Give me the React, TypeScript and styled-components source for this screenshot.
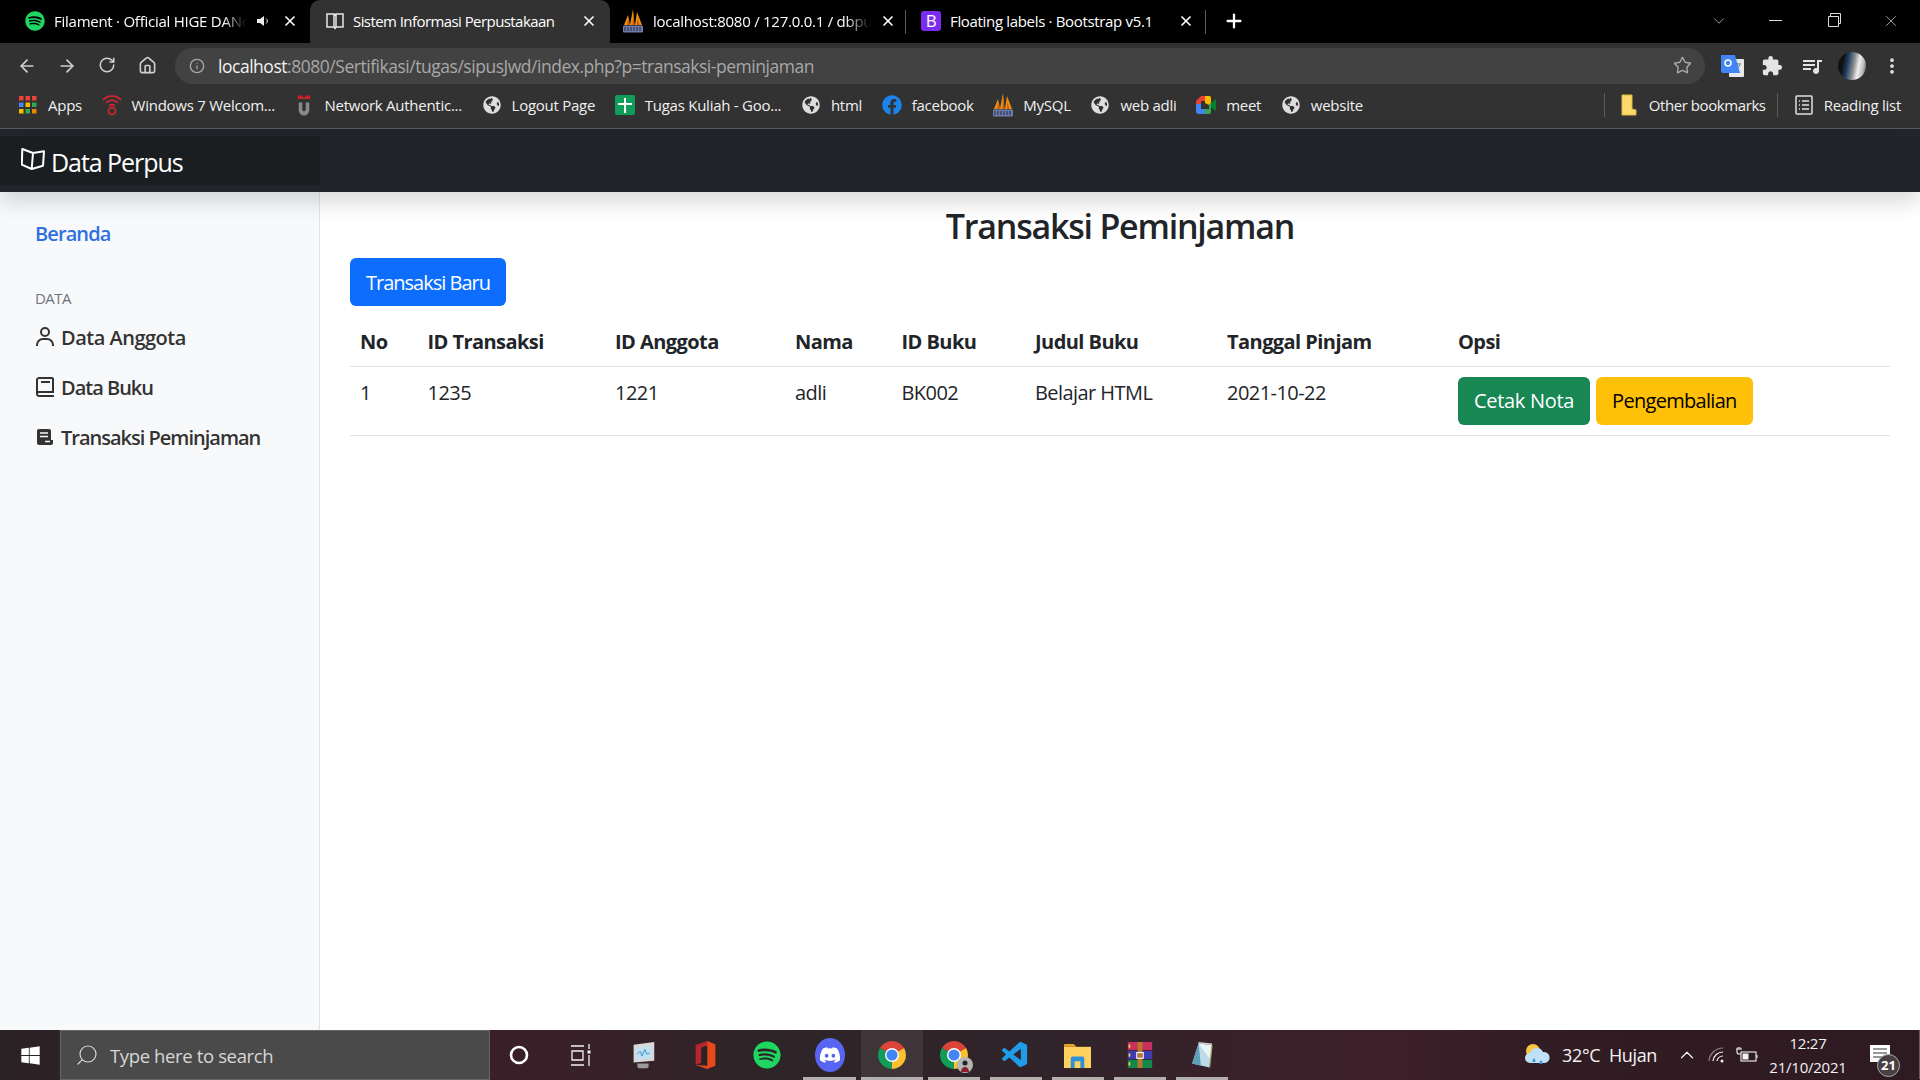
import React from "react";
import styled, { createGlobalStyle } from "styled-components";
import { BiBook, BiUser } from "react-icons/bi";
import { FaDiscord, FaFacebook, FaGlobeAmericas, FaSpotify, FaWindows } from "react-icons/fa";
import { MdExtension, MdQueueMusic } from "react-icons/md";
import { VscVscode } from "react-icons/vsc";
import { ArrowLeft, ArrowRight, ChevronDown, ChevronUp, Home, Info, MoreVertical, Plus, RotateCw, Search, Star, X } from "lucide-react";

const GlobalStyle = createGlobalStyle`
  html, body { margin: 0; padding: 0; background: #fff; }
  body { font-family: "Open Sans", "Noto Sans", sans-serif; letter-spacing: -0.035em; }
  * { box-sizing: border-box; }
`;

const Screen = styled.div`
  width: 1920px;
  height: 1080px;
  display: flex;
  flex-direction: column;
  overflow: hidden;
`;

/* tab strip */
const TabStrip = styled.div`
  height: 43px;
  background: #000;
  display: flex;
  align-items: stretch;
  flex-shrink: 0;
`;

const Tab = styled.div<{ $active?: boolean; $w: number; $pad: number; $divider?: boolean }>`
  position: relative;
  width: ${p => p.$w}px;
  padding: 0 0 2px ${p => p.$pad}px;
  display: flex;
  align-items: center;
  gap: 9px;
  color: #fff;
  font-size: 15px;
  letter-spacing: -0.017em;
  background: ${p => (p.$active ? "#323232" : "transparent")};
  border-radius: ${p => (p.$active ? "10px 10px 0 0" : "0")};
  &::after {
    content: "";
    position: absolute;
    right: 0;
    top: 10px;
    bottom: 9px;
    width: 1px;
    background: #5a5a5a;
    display: ${p => (p.$divider ? "block" : "none")};
  }
`;

const TabTitle = styled.span<{ $w: number; $fade?: boolean; $track?: string }>`
  width: ${p => p.$w}px;
  white-space: nowrap;
  overflow: hidden;
  flex-shrink: 0;
  letter-spacing: ${p => p.$track || "inherit"};
  ${p => p.$fade && "-webkit-mask-image: linear-gradient(90deg, #000 88%, transparent);"}
`;

const TabClose = styled(X)<{ $x: number }>`
  position: absolute;
  top: 13px;
  left: ${p => p.$x}px;
  color: #fff;
`;

const Speaker = styled.svg`
  position: absolute;
  left: 256px;
  top: 14px;
`;

const NewTab = styled(Plus)`
  margin: 10px 0 0 17px;
  color: #fff;
`;

const WindowControls = styled.div`
  margin-left: auto;
  display: flex;
  align-items: flex-start;
  color: #ccc;
`;

const WindowButton = styled.div`
  width: 57.5px;
  height: 43px;
  display: flex;
  justify-content: center;
  padding-top: 12px;
`;

/* address bar row */
const Toolbar = styled.div`
  height: 45px;
  background: #323232;
  display: flex;
  align-items: center;
  color: #d0d0d0;
  flex-shrink: 0;
`;

const NavButton = styled.div`
  width: 40px;
  display: flex;
  justify-content: center;
`;

const NavGroup = styled.div`
  width: 175px;
  display: flex;
  padding-left: 7px;
`;

const AddressBar = styled.div`
  width: 1530px;
  height: 36px;
  border-radius: 18px;
  background: #424242;
  display: flex;
  align-items: center;
  padding: 0 14px 0 14px;
  font-size: 17.5px;
  letter-spacing: -0.027em;
  color: #a8a8a8;
`;

const Host = styled.span`
  color: #f2f2f2;
  margin-left: 13px;
`;

const UrlEnd = styled.div`
  margin-left: auto;
  margin-right: -1px;
  display: flex;
`;

const ExtensionRow = styled.div`
  flex: 1;
  display: flex;
  align-items: center;
  padding-left: 7px;
`;

const ExtensionSlot = styled.div`
  width: 40px;
  display: flex;
  justify-content: center;
`;

const Avatar = styled.div`
  width: 28px;
  height: 28px;
  border-radius: 50%;
  background: linear-gradient(100deg, #111 0 20%, #1d3f63 35%, #8d8d8d 55%, #eee 70%, #bbb 85%, #333);
`;

/* bookmarks */
const BookmarksBar = styled.div`
  height: 41px;
  background: #323232;
  border-bottom: 1px solid #5c5c5c;
  display: flex;
  align-items: center;
  padding: 0 19px 6px 18px;
  color: #f0f0f0;
  font-size: 15px;
  letter-spacing: -0.017em;
  flex-shrink: 0;
  gap: 19.6px;
`;

const Bookmark = styled.div<{ $track?: string }>`
  display: flex;
  align-items: center;
  gap: 10px;
  white-space: nowrap;
  letter-spacing: ${p => p.$track || "inherit"};
`;

const BarDivider = styled.div<{ $first?: boolean }>`
  width: 1px;
  height: 24px;
  background: #5a5a5a;
  margin-left: ${p => (p.$first ? "auto" : "-8px")};
  margin-right: ${p => (p.$first ? "-6px" : "-4px")};
`;

const IconBox = styled.span`
  width: 20px;
  height: 20px;
  display: inline-flex;
  align-items: center;
  justify-content: center;
  flex-shrink: 0;
  svg {
    flex-shrink: 0;
  }
`;

/* page navbar */
const Navbar = styled.header`
  height: 63px;
  background: #212529;
  position: relative;
  z-index: 2;
  box-shadow: 0 10px 20px rgba(0, 0, 0, 0.15);
  display: flex;
  align-items: center;
  flex-shrink: 0;
`;

const Brand = styled.div`
  width: 320px;
  height: 49px;
  background: #1b1e21;
  color: #fff;
  font-size: 25px;
  letter-spacing: -0.042em;
  display: flex;
  align-items: center;
  gap: 6px;
  padding: 2px 0 0 21px;
  svg {
    margin-top: -4px;
  }
`;

/* page body */
const Body = styled.div`
  flex: 1;
  display: flex;
  min-height: 0;
`;

const Sidebar = styled.nav`
  width: 320px;
  flex-shrink: 0;
  background: #f8f9fa;
  border-right: 1px solid #e2e3e5;
  padding-top: 17px;
`;

const NavLink = styled.a<{ $current?: boolean; $track?: string }>`
  display: flex;
  align-items: center;
  gap: 4px;
  height: 50px;
  padding-left: 35px;
  font-size: 20px;
  line-height: 30px;
  font-weight: 600;
  letter-spacing: ${p => p.$track || "-0.05em"};
  color: ${p => (p.$current ? "#2f6fe0" : "#333")};
  svg {
    margin-left: -2px;
    margin-top: -2px;
  }
`;

const SideHeading = styled.h6`
  margin: 28px 0 3px;
  padding-left: 35px;
  font-size: 15px;
  line-height: 22.5px;
  font-weight: 500;
  text-transform: uppercase;
  color: #6c757d;
`;

const Main = styled.main`
  flex: 1;
  padding: 13px 30px 0;
  color: #212529;
`;

const Heading = styled.h3`
  margin: 0 0 11px;
  font-size: 34px;
  line-height: 42px;
  font-weight: 600;
  letter-spacing: -0.036em;
  text-align: center;
`;

const Button = styled.button<{ $bg: string; $fg: string; $track: string }>`
  height: 48px;
  padding: 0 16px;
  border: none;
  border-radius: 6px;
  background: ${p => p.$bg};
  color: ${p => p.$fg};
  font: inherit;
  font-size: 20px;
  letter-spacing: ${p => p.$track};
`;

const Table = styled.table`
  width: 100%;
  margin-top: 10px;
  border-collapse: collapse;
  table-layout: fixed;
  font-size: 20px;
  line-height: 30px;
`;

const HeadCell = styled.th`
  padding: 11px 10px 9px;
  text-align: left;
  font-weight: 700;
  border-bottom: 1px solid #dee2e6;
`;

const Cell = styled.td`
  padding: 11px 10px 9px;
  vertical-align: top;
  border-bottom: 1px solid #dee2e6;
`;

const Actions = styled.div`
  display: flex;
  gap: 6px;
  margin: -1px 0 1px;
`;

/* windows taskbar */
const Taskbar = styled.footer`
  height: 50px;
  display: flex;
  align-items: stretch;
  flex-shrink: 0;
  position: relative;
  color: #f2f2f2;
  background: linear-gradient(90deg, #2b2226 0%, #3a1f29 28%, #2e2528 40%, #31232a 55%, #3e2029 72%, #321c24 80%, #2e1a22 100%);
`;

const StartButton = styled.div`
  width: 60px;
  display: flex;
  align-items: center;
  justify-content: center;
  color: #fff;
`;

const SearchBox = styled.div`
  width: 430px;
  background: #4a4a4a;
  border: 1px solid #666;
  display: flex;
  align-items: center;
  gap: 11px;
  padding-left: 14px;
  font-size: 18.5px;
  letter-spacing: -0.02em;
  color: #d6d6d6;
`;

const TaskApps = styled.div`
  display: flex;
  margin-left: -2px;
`;

const TaskButton = styled.div<{ $active?: boolean; $open?: boolean }>`
  position: relative;
  width: 62.1px;
  display: flex;
  align-items: center;
  justify-content: center;
  background: ${p => (p.$active ? "rgba(255,255,255,0.08)" : "transparent")};
  &::after {
    content: "";
    display: ${p => (p.$open ? "block" : "none")};
    position: absolute;
    bottom: 0;
    left: ${p => (p.$active ? 0 : 5)}px;
    right: ${p => (p.$active ? 0 : 5)}px;
    height: 3px;
    background: #b3afad;
  }
`;

const DiscordBadge = styled.span`
  width: 30px;
  height: 34px;
  border-radius: 50%;
  background: #5865f2;
  color: #fff;
  display: flex;
  align-items: center;
  justify-content: center;
`;

const ProfileChrome = styled.span`
  position: relative;
  display: flex;
`;

const ProfileDot = styled.svg`
  position: absolute;
  right: -5px;
  bottom: -4px;
`;

const Tray = styled.div`
  margin-left: auto;
  display: flex;
  align-items: center;
  padding-bottom: 1px;
`;

const Weather = styled.div`
  display: flex;
  align-items: center;
  gap: 11px;
  font-size: 18px;
  letter-spacing: -0.02em;
  margin-right: 15px;
`;

const TrayIcon = styled.div`
  width: 30px;
  display: flex;
  justify-content: center;
`;

const Clock = styled.div`
  width: 92px;
  text-align: center;
  font-size: 15px;
  line-height: 24px;
  letter-spacing: -0.015em;
`;

const Notification = styled.div`
  width: 61px;
  position: relative;
  height: 100%;
  border-right: 1px solid #6a5a5e;
  margin-left: 5px;
`;

const NoteIcon = styled.svg`
  position: absolute;
  left: 11px;
  top: 15px;
`;

const NoteBadge = styled.span`
  position: absolute;
  left: 18px;
  top: 24px;
  width: 23px;
  height: 23px;
  border-radius: 50%;
  background: #4a4044;
  border: 1px solid #aaa;
  font-size: 13px;
  font-weight: 700;
  line-height: 21px;
  text-align: center;
  letter-spacing: 0;
  color: #fff;
`;

const GreenSpot = styled(FaSpotify)`
  color: #1ed760;
`;

const Chrome = ({ size = 28 }: { size?: number }) => (
  <svg width={size} height={size} viewBox="4 4 40 40">
    <path d="M24 24 6.68 14A20 20 0 0 1 41.32 14Z" fill="#db4437" />
    <path d="M24 24 41.32 14A20 20 0 0 1 24 44Z" fill="#fbc02d" />
    <path d="M24 24 24 44A20 20 0 0 1 6.68 14Z" fill="#0f9d58" />
    <circle cx="24" cy="24" r="10" fill="#fff" />
    <circle cx="24" cy="24" r="8" fill="#4285f4" />
  </svg>
);

const PmaLogo = () => (
  <svg width="22" height="24" viewBox="0 0 22 24">
    <path d="M2 16 6 6l2 10zM8 16l3-16 1.500 16zM13 16l2-13 5 13z" fill="#f29111" />
    <path d="M5 16 6 10l1.500 6zM10.500 16 11 6l1.500 10zM15 16l.5-7 2 7z" fill="#c4560f" />
    <rect x="1" y="16.500" width="20" height="7" rx="1" fill="#6f7ca8" />
    <path d="M3 18v4M6 18v4M9 18v4M12 18v4M15 18v4M18 18v4" stroke="#2c3560" strokeWidth="1.2" />
  </svg>
);

const BookTabIcon = () => (
  <svg width="18" height="18" viewBox="0 0 18 18" fill="none" stroke="#e8e8e8" strokeWidth="1.5">
    <path d="M1 2h7v13H1zM10 2h7v13h-7zM8 2l1 1 1-1M8 15l1 1.500 1-1.500" />
  </svg>
);

const BrandBook = () => (
  <svg width="24" height="23" viewBox="0 0 24 23" fill="none" stroke="#fff" strokeWidth="2" strokeLinejoin="round">
    <path d="M1.300 1 12 5 23 3.300 22 17.700 10.700 21 0.800 16.700ZM12 5 10.700 21" />
  </svg>
);

const BookContent = () => (
  <svg width="24" height="24" viewBox="0 0 24 24">
    <path d="M6 4h10a2 2 0 0 1 2 2v9h2v3a2 2 0 0 1-2 2H6a2 2 0 0 1-2-2V6a2 2 0 0 1 2-2z" fill="#333" />
    <path d="M7 8h8M7 11.500h8M12 16.500h5" stroke="#f8f9fa" strokeWidth="1.600" />
  </svg>
);

const BootstrapFav = styled.span`
  width: 20px;
  height: 20px;
  border-radius: 3px;
  background: #7c2cf0;
  color: #fff;
  font-size: 17px;
  line-height: 20px;
  text-align: center;
`;

const AppsIcon = () => {
  const colors = ["#ea4335", "#ea4335", "#ea4335", "#4285f4", "#fbbc04", "#34a853", "#fbbc04", "#34a853", "#ea8600"];
  return (
    <svg width="18" height="18" viewBox="0 0 18 18">
      {colors.map((c, i) => (
        <rect key={i} x={(i % 3) * 6.5} y={Math.floor(i / 3) * 6.5} width="4.5" height="4.5" fill={c} />
      ))}
    </svg>
  );
};

const RedWifi = () => (
  <svg width="20" height="22" viewBox="0 0 20 22" fill="none" stroke="#e3242b" strokeWidth="1.6">
    <path d="M1 6a12 12 0 0 1 18 0M4 9a8 8 0 0 1 12 0M7 12a4 4 0 0 1 6 0" />
    <circle cx="10" cy="17" r="3.500" />
  </svg>
);

const TelkomU = () => (
  <svg width="14" height="22" viewBox="0 0 16 24">
    <path d="M1 1h5l2 3 2-3h5v4H1z" fill="#c8202c" />
    <path d="M2 9h4v8a2 2 0 0 0 4 0V9h4v9a6 6 0 0 1-12 0z" fill="#8a8a8a" />
  </svg>
);

const SheetIcon = () => (
  <svg width="20" height="20" viewBox="0 0 20 20">
    <rect width="20" height="20" rx="2" fill="#0f9d58" />
    <path d="M9 3h2v5h6v2h-6v8H9v-8H3V8h6z" fill="#fff" />
  </svg>
);

const MeetIcon = () => (
  <svg width="20" height="18" viewBox="0 0 20 18">
    <path d="M5 0h8v5H5v3H0V5z" fill="#ea4335" />
    <path d="M0 8h5v5h8v5H3a3 3 0 0 1-3-3z" fill="#4285f4" />
    <path d="M9 0h4a2 2 0 0 1 2 2v5l-2 2-4-2z" fill="#fbbc04" />
    <path d="M13 9l2-2v9a2 2 0 0 1-2 2H9v-5h4z" fill="#34a853" />
    <path d="M15 7l5-4v12l-5-4z" fill="#00832d" />
  </svg>
);

const FolderFav = () => (
  <svg width="16" height="22" viewBox="0 0 16 22">
    <path d="M1 1h10v14l4 1v5H1z" fill="#fbd96a" stroke="#e0b83e" />
  </svg>
);

const ReadingIcon = () => (
  <svg width="18" height="20" viewBox="0 0 18 20" fill="none" stroke="#e0e0e0" strokeWidth="1.5">
    <rect x="1" y="1" width="16" height="18" rx="1" />
    <path d="M4 6h1M7 6h7M4 10h1M7 10h7M4 14h1M7 14h7" />
  </svg>
);

const TranslateIcon = () => (
  <svg width="24" height="24" viewBox="0 0 24 24">
    <rect x="9" y="5" width="15" height="18" rx="1" fill="#e8e8e8" />
    <path d="M14 10h7M17 9v2M15 17l5-6" stroke="#666" fill="none" />
    <path d="M1 1h14l5 18H3a2 2 0 0 1-2-2z" fill="#4285f4" />
    <circle cx="8" cy="9" r="3" fill="none" stroke="#fff" strokeWidth="1.5" />
  </svg>
);

const OfficeIcon = () => (
  <svg width="23" height="28" viewBox="0 0 24 34">
    <path d="M14 0 24 4v26l-10 4-14-5 14 1z" fill="#e64a19" />
    <path d="M14 0 0 5v24l7-2.500V8l7-2z" fill="#b7262e" />
    <path d="M7 8l7-2v24l-7-3z" fill="#2b2226" />
  </svg>
);

const MonitorIcon = () => (
  <svg width="30" height="30" viewBox="0 0 32 32">
    <path d="M6 5 28 2v20L6 24z" fill="#d8d8d8" />
    <path d="M9 8l16-2v13L9 21z" fill="#bfe1f3" />
    <path d="M10 15l3-3 2 5 3-7 2 5 3-1" stroke="#3a90c8" fill="none" />
    <path d="M10 25h12v3a2 2 0 0 1-2 2h-8a2 2 0 0 1-2-2z" fill="#9a9a9a" />
  </svg>
);

const FolderApp = () => (
  <svg width="27" height="27" viewBox="0 0 28 28">
    <path d="M0 3a1 1 0 0 1 1-1h9l3 3H0z" fill="#e8a623" />
    <path d="M0 5h28v22H0z" fill="#fcd15f" />
    <path d="M7 27V17a2 2 0 0 1 2-2h10a2 2 0 0 1 2 2v10h-4v-7h-6v7z" fill="#2f8fd8" />
  </svg>
);

const RarIcon = () => (
  <svg width="30" height="26" viewBox="0 0 30 32">
    <rect y="0" width="30" height="10" fill="#c7305f" />
    <rect y="11" width="30" height="10" fill="#3d3cb0" />
    <rect y="22" width="30" height="10" fill="#14884a" />
    <rect x="12" y="0" width="6" height="32" fill="#b9772c" />
    <rect x="11" y="13" width="8" height="7" fill="none" stroke="#eee" strokeWidth="1.5" />
    <path d="M2 3v4M2 14v4M2 25v4" stroke="#f5d54a" strokeWidth="2" />
  </svg>
);

const NotepadIcon = () => (
  <svg width="27" height="27" viewBox="0 0 28 34">
    <path d="M9 2 26 4 23 32 1 27z" fill="#bcdde8" />
    <path d="M9 2 26 4 24 22z" fill="#e7f4f8" />
    <path d="M1 27 9 2l3 28z" fill="#5b9fb8" />
    <path d="M9 1l17 2" stroke="#ccc" strokeWidth="2" />
    <path d="M26 4 23 32" stroke="#a89b60" strokeWidth="1.5" />
  </svg>
);

const CortanaIcon = () => (
  <svg width="20" height="20" viewBox="0 0 20 20" fill="none" stroke="#fff" strokeWidth="2.600">
    <circle cx="10" cy="10" r="8" />
  </svg>
);

const TaskViewIcon = () => (
  <svg width="22" height="24" viewBox="0 0 22 24" fill="none" stroke="#f2f2f2" strokeWidth="1.300">
    <path d="M1 3h13M1 22h13M2 8h11v9H2zM19 1v5M19 12v11" />
    <rect x="17.500" y="7.500" width="3" height="3" fill="#f2f2f2" stroke="none" />
  </svg>
);

const WeatherIcon = () => (
  <svg width="27" height="24" viewBox="0 0 27 24">
    <circle cx="9" cy="8" r="7" fill="#f7c544" />
    <path d="M6 20a5 5 0 0 1 0-10 7 7 0 0 1 13-1 5.500 5.500 0 0 1 2 11z" fill="#bfe0f5" />
    <path d="M10 15c-2 3-2 4 0 4s2-1 0-4zM17 17c-2 3-2 4 0 4s2-1 0-4z" fill="#3c8fdc" />
  </svg>
);

const WifiIcon = () => (
  <svg width="18" height="16" viewBox="0 0 18 16" fill="none" strokeWidth="1.200">
    <path d="M1 14A14 14 0 0 1 15 1" stroke="#8b8487" />
    <path d="M5 14A10 10 0 0 1 15 5" stroke="#f2f2f2" />
    <path d="M9 14a6 6 0 0 1 6-5" stroke="#f2f2f2" />
    <circle cx="14" cy="14" r="1.500" fill="#f2f2f2" />
  </svg>
);

const BatteryIcon = () => (
  <svg width="22" height="16" viewBox="0 0 22 16" fill="none" stroke="#f2f2f2" strokeWidth="1.100">
    <rect x="5" y="5" width="15" height="9" />
    <rect x="6.500" y="6.500" width="6" height="6" fill="#f2f2f2" stroke="none" />
    <path d="M21 8v3M1 2v3a2 2 0 0 0 2 2h2M2 0v2M4 0v2M0 2h6" />
  </svg>
);

const tabs = [
  { title: "Filament · Official HIGE DANdism", w: 310, pad: 25, icon: <GreenSpot size={20} />, titleW: 192, closeX: 282, fade: true, speaker: true },
  { title: "Sistem Informasi Perpustakaan", w: 300, pad: 16, icon: <BookTabIcon />, titleW: 210, closeX: 271, active: true, track: "-0.038em" },
  { title: "localhost:8080 / 127.0.0.1 / dbpustaka", w: 296, pad: 12, icon: <PmaLogo />, titleW: 218, closeX: 270, fade: true, divider: true },
  { title: "Floating labels · Bootstrap v5.1", w: 300, pad: 15, icon: <BootstrapFav>B</BootstrapFav>, titleW: 210, closeX: 272, divider: true, track: "-0.022em" },
];

const bookmarks = [
  { label: "Apps", icon: <AppsIcon /> },
  { label: "Windows 7 Welcom...", icon: <RedWifi /> },
  { label: "Network Authentic...", icon: <TelkomU /> },
  { label: "Logout Page", icon: <FaGlobeAmericas size={18} color="#dedede" /> },
  { label: "Tugas Kuliah - Goo...", icon: <SheetIcon /> },
  { label: "html", icon: <FaGlobeAmericas size={18} color="#dedede" /> },
  { label: "facebook", icon: <FaFacebook size={20} color="#1b83ec" /> },
  { label: "MySQL", icon: <PmaLogo /> },
  { label: "web adli", icon: <FaGlobeAmericas size={18} color="#dedede" /> },
  { label: "meet", icon: <MeetIcon /> },
  { label: "website", icon: <FaGlobeAmericas size={18} color="#dedede" /> },
];

const columns = [
  { title: "No", w: 67.5 },
  { title: "ID Transaksi", w: 187.5 },
  { title: "ID Anggota", w: 180 },
  { title: "Nama", w: 106.5 },
  { title: "ID Buku", w: 133.5 },
  { title: "Judul Buku", w: 192 },
  { title: "Tanggal Pinjam", w: 231 },
  { title: "Opsi", w: 442 },
];

const row = ["1", "1235", "1221", "adli", "BK002", "Belajar HTML", "2021-10-22"];

const taskApps = [
  { icon: <CortanaIcon /> },
  { icon: <TaskViewIcon /> },
  { icon: <MonitorIcon /> },
  { icon: <OfficeIcon /> },
  { icon: <FaSpotify size={28} color="#1ed760" /> },
  { icon: <DiscordBadge><FaDiscord size={22} /></DiscordBadge>, open: true },
  { icon: <Chrome />, open: true, active: true },
  {
    icon: (
      <ProfileChrome>
        <Chrome />
        <ProfileDot width="16" height="16" viewBox="0 0 16 16">
          <circle cx="8" cy="8" r="8" fill="#b5b5b5" />
          <circle cx="8" cy="6" r="2.500" fill="#222" />
          <path d="M4 15a4 5 0 0 1 8 0z" fill="#8c1d2a" />
        </ProfileDot>
      </ProfileChrome>
    ),
    open: true,
  },
  { icon: <VscVscode size={31} color="#1e9ce8" />, open: true },
  { icon: <FolderApp />, open: true },
  { icon: <RarIcon />, open: true },
  { icon: <NotepadIcon />, open: true },
];

const App: React.FC = () => {
  return (
    <Screen>
      <GlobalStyle />
      <TabStrip>
        {tabs.map(tab => (
          <Tab key={tab.title} $w={tab.w} $pad={tab.pad} $active={tab.active} $divider={tab.divider}>
            {tab.icon}
            <TabTitle $w={tab.titleW} $fade={tab.fade} $track={tab.track}>{tab.title}</TabTitle>
            {tab.speaker && (
              <Speaker width="14" height="14" viewBox="0 0 14 14" fill="#eee">
                <path d="M1 5h3l4-3v10L4 9H1z" />
                <path d="M10 4.500a3 3 0 0 1 0 5" stroke="#eee" fill="none" />
              </Speaker>
            )}
            <TabClose size={16} strokeWidth={2.5} $x={tab.closeX} />
          </Tab>
        ))}
        <NewTab size={22} strokeWidth={2.5} />
        <WindowControls>
          <WindowButton><ChevronDown size={18} strokeWidth={1} /></WindowButton>
          <WindowButton>
            <svg width="16" height="16" viewBox="0 0 16 16" stroke="#ddd" fill="none"><path d="M1 8.500h13" /></svg>
          </WindowButton>
          <WindowButton>
            <svg width="16" height="16" viewBox="0 0 16 16" stroke="#ddd" fill="none"><path d="M2.500 4.500h10v10h-10zM4.500 4.500v-3h10v10h-2" /></svg>
          </WindowButton>
          <WindowButton><X size={18} strokeWidth={1} /></WindowButton>
        </WindowControls>
      </TabStrip>

      <Toolbar>
        <NavGroup>
          <NavButton><ArrowLeft size={20} /></NavButton>
          <NavButton><ArrowRight size={20} /></NavButton>
          <NavButton><RotateCw size={18} /></NavButton>
          <NavButton><Home size={19} /></NavButton>
        </NavGroup>
        <AddressBar>
          <Info size={16} />
          <span>
            <Host>localhost</Host>:8080/Sertifikasi/tugas/sipusJwd/index.php?p=transaksi-peminjaman
          </span>
          <UrlEnd><Star size={19} strokeWidth={1.8} /></UrlEnd>
        </AddressBar>
        <ExtensionRow>
          <ExtensionSlot><TranslateIcon /></ExtensionSlot>
          <ExtensionSlot><MdExtension size={22} color="#e4e4e4" /></ExtensionSlot>
          <ExtensionSlot><MdQueueMusic size={24} color="#e4e4e4" /></ExtensionSlot>
          <ExtensionSlot><Avatar /></ExtensionSlot>
          <ExtensionSlot><MoreVertical size={20} color="#e4e4e4" strokeWidth={2.5} /></ExtensionSlot>
        </ExtensionRow>
      </Toolbar>

      <BookmarksBar>
        {bookmarks.map(item => (
          <Bookmark key={item.label}>
            <IconBox>{item.icon}</IconBox>
            {item.label}
          </Bookmark>
        ))}
        <BarDivider $first />
        <Bookmark $track="-0.028em">
          <IconBox><FolderFav /></IconBox>
          Other bookmarks
        </Bookmark>
        <BarDivider />
        <Bookmark>
          <IconBox><ReadingIcon /></IconBox>
          Reading list
        </Bookmark>
      </BookmarksBar>

      <Navbar>
        <Brand>
          <BrandBook />
          Data Perpus
        </Brand>
      </Navbar>

      <Body>
        <Sidebar>
          <NavLink $current $track="-0.045em">Beranda</NavLink>
          <SideHeading>Data</SideHeading>
          <NavLink $track="-0.025em"><BiUser size={24} />Data Anggota</NavLink>
          <NavLink><BiBook size={24} />Data Buku</NavLink>
          <NavLink><BookContent />Transaksi Peminjaman</NavLink>
        </Sidebar>
        <Main>
          <Heading>Transaksi Peminjaman</Heading>
          <Button $bg="#0d6efd" $fg="#fff" $track="-0.05em">Transaksi Baru</Button>
          <Table>
            <colgroup>
              {columns.map(col => (
                <col key={col.title} width={col.w} />
              ))}
            </colgroup>
            <thead>
              <tr>
                {columns.map(col => (
                  <HeadCell key={col.title}>{col.title}</HeadCell>
                ))}
              </tr>
            </thead>
            <tbody>
              <tr>
                {row.map((value, idx) => (
                  <Cell key={idx}>{value}</Cell>
                ))}
                <Cell>
                  <Actions>
                    <Button $bg="#198754" $fg="#fff" $track="-0.015em">Cetak Nota</Button>
                    <Button $bg="#ffc107" $fg="#000" $track="-0.035em">Pengembalian</Button>
                  </Actions>
                </Cell>
              </tr>
            </tbody>
          </Table>
        </Main>
      </Body>

      <Taskbar>
        <StartButton><FaWindows size={21} /></StartButton>
        <SearchBox>
          <Search size={24} strokeWidth={1.2} style={{ transform: "scaleX(-1)" }} />
          Type here to search
        </SearchBox>
        <TaskApps>
          {taskApps.map((app, idx) => (
            <TaskButton key={idx} $active={app.active} $open={app.open}>{app.icon}</TaskButton>
          ))}
        </TaskApps>
        <Tray>
          <Weather>
            <WeatherIcon />
            <span>32°C&nbsp; Hujan</span>
          </Weather>
          <TrayIcon><ChevronUp size={22} strokeWidth={1.3} /></TrayIcon>
          <TrayIcon><WifiIcon /></TrayIcon>
          <TrayIcon><BatteryIcon /></TrayIcon>
          <Clock>12:27<br />21/10/2021</Clock>
          <Notification>
            <NoteIcon width="20" height="17" viewBox="0 0 20 17">
              <rect width="20" height="17" fill="#fff" />
              <path d="M3 4h14M3 8h14M3 12h14" stroke="#333" />
            </NoteIcon>
            <NoteBadge>21</NoteBadge>
          </Notification>
        </Tray>
      </Taskbar>
    </Screen>
  );
};

export default App;
